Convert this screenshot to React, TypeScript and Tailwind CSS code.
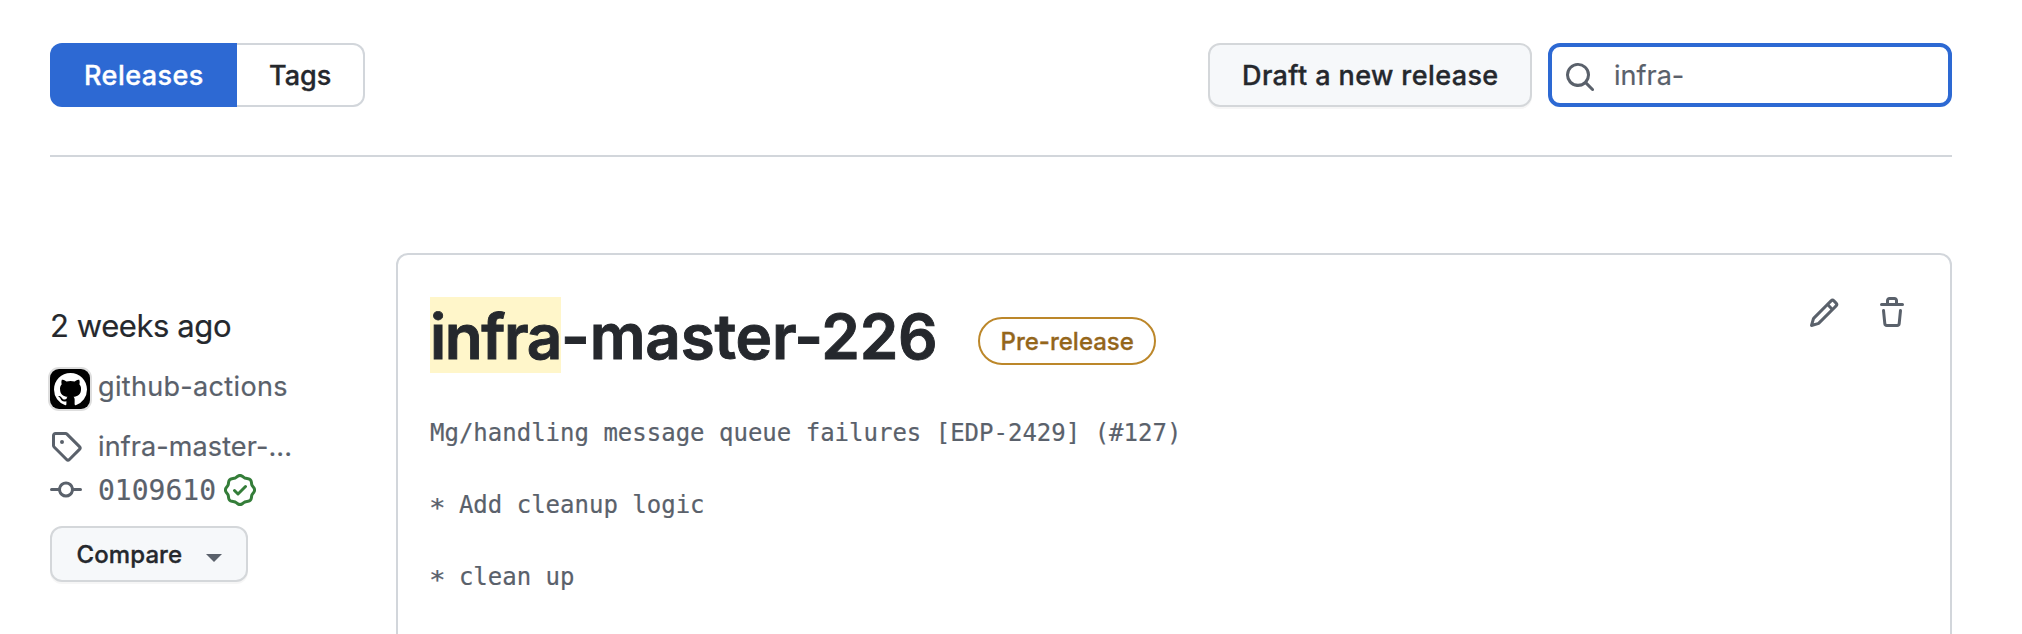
import type { ReactNode } from "react";

function Octicon({ d, size = 32, className = "" }: { d: string; size?: number; className?: string }) {
  return (
    <svg viewBox="0 0 16 16" width={size} height={size} fill="currentColor" className={`block shrink-0 ${className}`} aria-hidden="true">
      <path d={d} />
    </svg>
  );
}

const SEARCH =
  "M10.68 11.74a6 6 0 0 1-7.922-8.982 6 6 0 0 1 8.982 7.922l3.04 3.04a.749.749 0 0 1-.326 1.275.749.749 0 0 1-.734-.215ZM11.5 7a4.499 4.499 0 1 0-8.997 0A4.499 4.499 0 0 0 11.5 7Z";
const TAG =
  "M1 7.775V2.75C1 1.784 1.784 1 2.75 1h5.025c.464 0 .91.184 1.238.513l6.25 6.25a1.75 1.75 0 0 1 0 2.474l-5.026 5.026a1.75 1.75 0 0 1-2.474 0l-6.25-6.25A1.752 1.752 0 0 1 1 7.775Zm1.5 0c0 .066.026.13.073.177l6.25 6.25a.25.25 0 0 0 .354 0l5.025-5.025a.25.25 0 0 0 0-.354l-6.25-6.25a.25.25 0 0 0-.177-.073H2.75a.25.25 0 0 0-.25.25ZM6 5a1 1 0 1 1 0 2 1 1 0 0 1 0-2Z";
const COMMIT =
  "M11.93 8.5a4.002 4.002 0 0 1-7.86 0H.75a.75.75 0 0 1 0-1.5h3.32a4.002 4.002 0 0 1 7.86 0h3.32a.75.75 0 0 1 0 1.5Zm-1.43-.75a2.5 2.5 0 1 0-5 0 2.5 2.5 0 0 0 5 0Z";
const VERIFIED =
  "m9.585.52.929.68c.153.112.331.186.518.215l1.138.175a2.678 2.678 0 0 1 2.24 2.24l.174 1.139c.029.187.103.365.215.518l.68.928a2.677 2.677 0 0 1 0 3.17l-.68.928a1.174 1.174 0 0 0-.215.518l-.175 1.138a2.678 2.678 0 0 1-2.241 2.241l-1.138.175a1.17 1.17 0 0 0-.518.215l-.928.68a2.677 2.677 0 0 1-3.17 0l-.928-.68a1.174 1.174 0 0 0-.518-.215L3.83 14.41a2.678 2.678 0 0 1-2.24-2.24l-.175-1.138a1.17 1.17 0 0 0-.215-.518l-.68-.928a2.677 2.677 0 0 1 0-3.17l.68-.928c.112-.153.186-.331.215-.518l.175-1.14a2.678 2.678 0 0 1 2.24-2.24l1.139-.175c.187-.029.365-.103.518-.215l.928-.68a2.677 2.677 0 0 1 3.17 0ZM7.303 1.728l-.927.68a2.67 2.67 0 0 1-1.18.489l-1.137.174a1.179 1.179 0 0 0-.987.987l-.174 1.136a2.677 2.677 0 0 1-.489 1.18l-.68.928a1.18 1.18 0 0 0 0 1.394l.68.927c.256.348.424.753.489 1.18l.174 1.137c.078.509.478.909.987.987l1.136.174a2.67 2.67 0 0 1 1.18.489l.928.68c.414.305.979.305 1.394 0l.927-.68a2.67 2.67 0 0 1 1.18-.489l1.137-.174a1.18 1.18 0 0 0 .987-.987l.174-1.136a2.67 2.67 0 0 1 .489-1.18l.68-.928a1.176 1.176 0 0 0 0-1.394l-.68-.927a2.686 2.686 0 0 1-.489-1.18l-.174-1.137a1.179 1.179 0 0 0-.987-.987l-1.136-.174a2.677 2.677 0 0 1-1.18-.489l-.928-.68a1.176 1.176 0 0 0-1.394 0ZM11.28 6.78l-3.75 3.75a.75.75 0 0 1-1.06 0L4.72 8.78a.751.751 0 0 1 .018-1.042.751.751 0 0 1 1.042-.018L7 8.94l3.22-3.22a.751.751 0 0 1 1.042.018.751.751 0 0 1 .018 1.042Z";
const PENCIL =
  "M11.013 1.427a1.75 1.75 0 0 1 2.474 0l1.086 1.086a1.75 1.75 0 0 1 0 2.474l-8.61 8.61c-.21.21-.47.364-.756.445l-3.251.93a.75.75 0 0 1-.927-.928l.929-3.25c.081-.286.235-.547.445-.758l8.61-8.61Zm.176 4.823L9.75 4.81l-6.286 6.287a.253.253 0 0 0-.064.108l-.558 1.953 1.953-.558a.253.253 0 0 0 .108-.064Zm1.238-3.763a.25.25 0 0 0-.354 0L10.811 3.75l1.439 1.44 1.263-1.263a.25.25 0 0 0 0-.354Z";
const TRASH =
  "M11 1.75V3h2.25a.75.75 0 0 1 0 1.5H2.75a.75.75 0 0 1 0-1.5H5V1.75C5 .784 5.784 0 6.75 0h2.5C10.216 0 11 .784 11 1.75ZM4.496 6.675l.66 6.6a.25.25 0 0 0 .249.225h5.19a.25.25 0 0 0 .249-.225l.66-6.6a.75.75 0 0 1 1.492.149l-.66 6.6A1.748 1.748 0 0 1 10.595 15h-5.19a1.75 1.75 0 0 1-1.741-1.575l-.66-6.6a.75.75 0 1 1 1.492-.15ZM6.5 1.75V3h3V1.75a.25.25 0 0 0-.25-.25h-2.5a.25.25 0 0 0-.25.25Z";
const MARK =
  "M8 0c4.42 0 8 3.58 8 8a8.013 8.013 0 0 1-5.45 7.59c-.4.08-.55-.17-.55-.38 0-.27.01-1.13.01-2.2 0-.75-.25-1.23-.54-1.48 1.78-.2 3.65-.88 3.65-3.95 0-.88-.31-1.59-.82-2.15.08-.2.36-1.02-.08-2.12 0 0-.67-.22-2.2.82-.64-.18-1.32-.27-2-.27-.68 0-1.36.09-2 .27-1.53-1.03-2.2-.82-2.2-.82-.44 1.1-.16 1.92-.08 2.12-.51.56-.82 1.28-.82 2.15 0 3.06 1.86 3.75 3.64 3.95-.23.2-.44.55-.51 1.07-.46.21-1.61.55-2.33-.66-.15-.24-.6-.83-1.23-.82-.67.01-.27.38.01.53.34.19.73.9.82 1.13.16.45.68 1.31 2.69.94 0 .67.01 1.3.01 1.49 0 .21-.15.45-.55.38A7.995 7.995 0 0 1 0 8c0-4.42 3.58-8 8-8Z";

function MetaRow({ icon, children, className = "" }: { icon: string; children: ReactNode; className?: string }) {
  return (
    <div className={`flex h-8 items-center text-[#5a616b] ${className}`}>
      <Octicon d={icon} />
      {children}
    </div>
  );
}

function Bullet() {
  return <span className="inline-block translate-y-[3px] scale-x-[1.15]">*</span>;
}

function Toolbar() {
  return (
    <header className="flex h-16 items-stretch">
      <nav className="flex text-[27px] font-medium [-webkit-text-stroke:0.35px]">
        <button className="flex w-[187px] items-center rounded-l-xl bg-[#2d69d3] pt-0.5 pl-[34px] tracking-[0.45px] text-white">Releases</button>
        <button className="flex w-[128px] items-center rounded-r-xl border-2 border-l-0 border-[#d2d6db] pt-0.5 pl-8 text-[#25282d]">Tags</button>
      </nav>
      <button className="ml-auto flex w-[324px] items-center rounded-xl border-2 border-[#d4d7da] bg-[#f6f8fa] pt-0.5 pl-8 text-[27px] font-medium tracking-[0.4px] text-[#25282d] shadow-[0_2px_0_rgba(27,31,36,0.04)] [-webkit-text-stroke:0.35px]">
        Draft a new release
      </button>
      <label className="ml-4 flex w-[404px] items-center rounded-xl border-4 border-[#2d69d3] bg-white pl-3 text-[#5a616b]">
        <Octicon d={SEARCH} className="mt-1" />
        <span className="mt-0.5 ml-[18px] text-[27px] [-webkit-text-stroke:0.2px]">infra-</span>
      </label>
    </header>
  );
}

function ReleaseMeta() {
  return (
    <aside className="w-[346px] shrink-0 pt-[49px]">
      <div className="h-12 text-[31px] leading-[48px] tracking-[-0.42px] text-[#25282d] [-webkit-text-stroke:0.2px]">2 weeks ago</div>
      <div className="mt-[19px] flex h-10">
        <div className="flex size-10 items-center justify-center rounded-[9px] bg-black text-white shadow-[0_0_0_2px_#dedede]">
          <Octicon d={MARK} size={33} />
        </div>
        <span className="ml-2 text-[27px] leading-[35px] tracking-[0.33px] text-[#5a616b] [-webkit-text-stroke:0.2px]">github-actions</span>
      </div>
      <MetaRow icon={TAG} className="mt-[21px]">
        <span className="mt-0.5 ml-4 text-[27px] tracking-[0.1px] [-webkit-text-stroke:0.2px]">infra-master-...</span>
      </MetaRow>
      <MetaRow icon={COMMIT} className="mt-3">
        <span className="mt-0.5 ml-4 w-[126px] font-['DejaVu_Sans_Mono',monospace] text-[28px] [-webkit-text-stroke:0.2px]">0109610</span>
        <Octicon d={VERIFIED} className="text-[#347d39]" />
      </MetaRow>
      <button className="mt-5 flex h-14 w-[198px] items-center rounded-xl border-2 border-[#d4d7da] bg-[#f6f8fa] pt-0.5 pl-[24.5px] text-2xl font-medium tracking-[0.1px] text-[#25282d] shadow-[0_2px_0_rgba(27,31,36,0.04)]">
        <span className="w-[106px] text-left [-webkit-text-stroke:0.35px]">Compare</span>
        <svg viewBox="0 0 16 8" width="16" height="8" className="mt-1.5 ml-[23.5px] text-[#5a616b]" fill="currentColor" aria-hidden="true">
          <path d="M0 0h16L8 8z" />
        </svg>
      </button>
    </aside>
  );
}

function ReleaseCard() {
  return (
    <article className="h-[420px] flex-1 rounded-xl border-2 border-[#d2d6db] pt-[42px] pr-[42px] pl-8">
      <div className="flex h-[76px] items-start">
        <h1 className="flex text-[62px] leading-[79px] font-semibold text-[#25282d] [-webkit-text-stroke:0.9px]">
          <mark className="h-[76px] w-[131px] bg-[#fff6ca] tracking-[-1.4px] text-inherit">infra</mark>
          <span className="w-[417px] tracking-[-0.2px]">-master-226</span>
        </h1>
        <span className="mt-5 flex h-12 w-[178px] items-center rounded-full border-2 border-[#bc872a] pt-px pl-[20.5px] text-2xl font-medium text-[#94661b] [-webkit-text-stroke:0.3px]">
          Pre-release
        </span>
        <div className="ml-auto flex gap-9 text-[#5a616b]">
          <Octicon d={PENCIL} />
          <Octicon d={TRASH} />
        </div>
      </div>
      <pre className="mt-[42px] font-['DejaVu_Sans_Mono',monospace] text-2xl leading-9 text-[#5a616b] [-webkit-text-stroke:0.2px]">
        {"Mg/handling message queue failures [EDP-2429] (#127)\n\n"}
        <Bullet />
        {" Add cleanup logic\n\n"}
        <Bullet />
        {" clean up"}
      </pre>
    </article>
  );
}

export default function App() {
  return (
    <main className="h-[634px] w-[2022px] overflow-hidden bg-white pt-[43px] pr-[70px] pl-[50px] font-['Inter',sans-serif]">
      <Toolbar />
      <div className="mt-12 h-0.5 bg-[#d2d6db]" />
      <section className="mt-24 flex">
        <ReleaseMeta />
        <ReleaseCard />
      </section>
    </main>
  );
}
